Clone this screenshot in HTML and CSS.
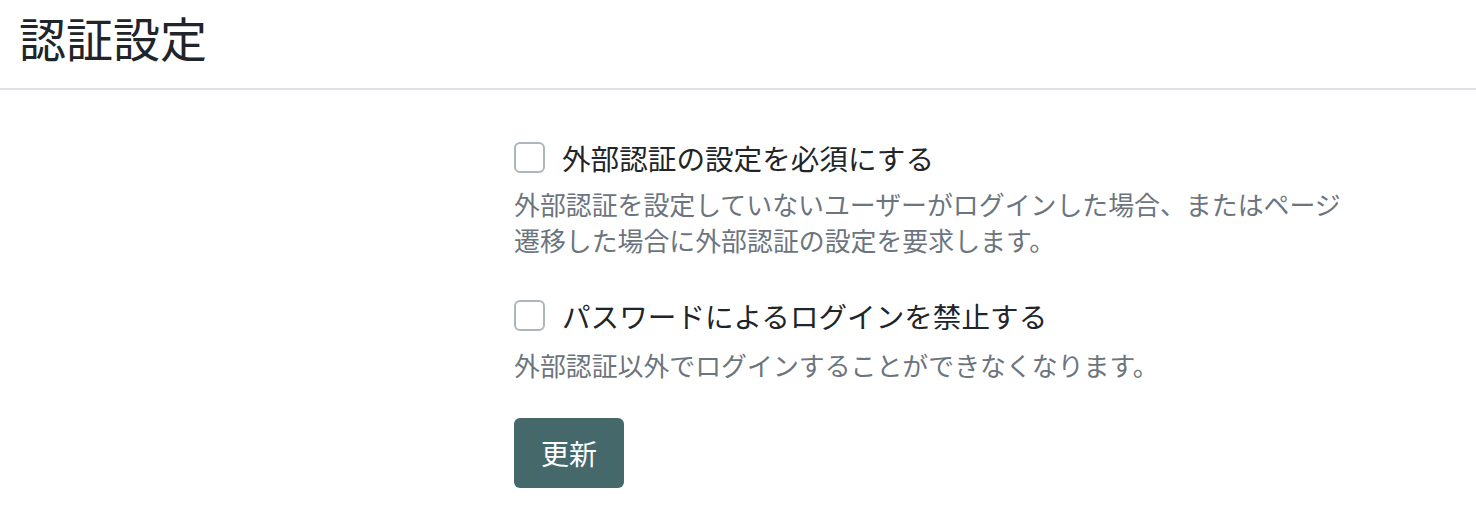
FILE: index.html
```html
<!DOCTYPE html>
<html lang="ja">
<head>
<meta charset="utf-8">
<title>認証設定</title>
<link rel="stylesheet" href="styles.css">
</head>
<body>
<header class="page-header">
  <h1 class="page-title">認証設定</h1>
</header>
<main class="content">
  <form class="settings-form">
    <div class="form-group">
      <label class="check-row">
        <span class="checkbox"></span>
        <span class="check-label">外部認証の設定を必須にする</span>
      </label>
      <p class="help-text">外部認証を設定していないユーザーがログインした場合、またはページ<br>遷移した場合に外部認証の設定を要求します。</p>
    </div>
    <div class="form-group form-group-last">
      <label class="check-row">
        <span class="checkbox"></span>
        <span class="check-label">パスワードによるログインを禁止する</span>
      </label>
      <p class="help-text">外部認証以外でログインすることができなくなります。</p>
    </div>
    <button type="button" class="btn-primary">更新</button>
  </form>
</main>
</body>
</html>
```
FILE: styles.css
```css
html, body {
  margin: 0;
  padding: 0;
  background: #ffffff;
}
body {
  font-family: "Noto Sans CJK JP", "Noto Sans", sans-serif;
  color: #212529;
}
.page-header {
  height: 90px;
  border-bottom: 2px solid #dee2e6;
  padding-left: 19px;
  box-sizing: border-box;
  display: flex;
  align-items: center;
}
.page-title {
  margin: 0;
  font-size: 47px;
  font-weight: 400;
  line-height: 1;
  padding-bottom: 16px;
  color: #212529;
}
.content {
  padding-left: 514px;
  padding-top: 46px;
}
.settings-form {
  display: flex;
  flex-direction: column;
  align-items: flex-start;
}
.form-group {
  display: flex;
  flex-direction: column;
  margin-bottom: 36px;
}
.form-group-last {
  margin-bottom: 35px;
}
.form-group-last .help-text {
  margin-top: 10px;
}
.check-row {
  display: flex;
  align-items: center;
  gap: 17px;
  height: 43px;
}
.checkbox {
  width: 31px;
  height: 31px;
  box-sizing: border-box;
  border: 2px solid #adb5bd;
  border-radius: 6px;
  background: #fff;
  flex: none;
}
.check-label {
  font-size: 28.6px;
  line-height: 43px;
  color: #212529;
}
.help-text {
  margin: 7px 0 0;
  font-size: 25.9px;
  line-height: 36px;
  color: #6c757d;
}
.btn-primary {
  margin: 0;
  width: 110px;
  height: 70px;
  border: none;
  border-radius: 6px;
  background: #45686b;
  color: #ffffff;
  font-family: "Noto Sans CJK JP", "Noto Sans", sans-serif;
  font-size: 28px;
  padding: 0;
}
```
